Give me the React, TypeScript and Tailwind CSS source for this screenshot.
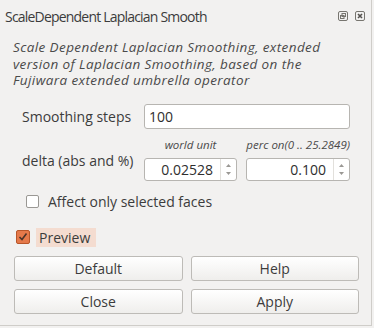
const font = { fontFamily: '"Open Sans", "DejaVu Sans", sans-serif' };

function SpinBox({ value }: { value: string }) {
    return (
        <div className="flex h-[25px] flex-1 rounded-[3px] border border-[#b7b5b1] bg-white">
            <div className="flex flex-1 items-center justify-end pr-[7px] text-[14px] text-[#2e2e2e]">
                {value}
            </div>
            <div className="flex w-[16px] flex-col items-center justify-center gap-[5px] border-l border-[#e2e0dc]">
                <svg width="5" height="3" viewBox="0 0 5 3">
                    <path d="M0 3 L2.5 0 L5 3 Z" fill="#9a9894" />
                </svg>
                <svg width="5" height="3" viewBox="0 0 5 3">
                    <path d="M0 0 L2.5 3 L5 0 Z" fill="#9a9894" />
                </svg>
            </div>
        </div>
    );
}

function Button({ label }: { label: string }) {
    return (
        <button
            type="button"
            className="h-[25px] flex-1 rounded-[3px] border border-[#bdbbb7] bg-gradient-to-b from-white to-[#efeeec] text-[14px] text-[#3c3c3c]"
        >
            {label}
        </button>
    );
}

export default function App() {
    return (
        <div className="h-[328px] w-[374px] bg-[#f2f1f0]" style={font}>
            <div className="flex h-[326px] w-[372px] flex-col border-b border-r border-[#cfcdc9] bg-[#f2f1f0]">
                {/* Titulo */}
                <div className="flex h-[32px] items-center justify-between pl-[5px] pr-[6px]">
                    <span className="text-[14px] tracking-[-0.8px] text-[#3c3c3c]">ScaleDependent Laplacian Smooth</span>
                    <div className="flex items-center gap-[7px]">
                        <svg width="10" height="10" viewBox="0 0 10 10">
                            <rect x="0.5" y="0.5" width="9" height="9" rx="1.5" fill="none" stroke="#77756f" />
                            <rect x="4" y="2.5" width="3.5" height="3" fill="none" stroke="#77756f" />
                            <rect x="2.5" y="4.5" width="3.5" height="3" fill="none" stroke="#77756f" />
                        </svg>
                        <svg width="10" height="10" viewBox="0 0 10 10">
                            <rect x="0.5" y="0.5" width="9" height="9" rx="1.5" fill="none" stroke="#77756f" />
                            <path d="M3 3 L7 7 M7 3 L3 7" stroke="#55534f" strokeWidth="1.6" />
                        </svg>
                    </div>
                </div>

                {/* Descricao */}
                <div className="mt-[7px] flex flex-col pl-[13px] pr-[4px] text-[13.5px] italic tracking-[0.4px] text-[#4a4a4a]">
                    <span className="h-[16.5px] leading-[16.5px]">Scale Dependent Laplacian Smoothing, extended</span>
                    <span className="h-[16.5px] leading-[16.5px]">version of Laplacian Smoothing, based on the</span>
                    <span className="h-[16.5px] leading-[16.5px]">Fujiwara extended umbrella operator</span>
                </div>

                {/* Formulario */}
                <div className="mt-[15px] flex items-center pr-[21px]">
                    <span className="w-[144px] pl-[22px] text-[14px] text-[#3c3c3c]">Smoothing steps</span>
                    <div className="flex h-[25px] flex-1 items-center rounded-[3px] border border-[#b7b5b1] bg-white pl-[4px] text-[14px] text-[#2e2e2e]">
                        100
                    </div>
                </div>

                <div className="mt-[9px] flex pr-[21px]">
                    <span className="w-[144px] pl-[22px] pt-[13px] text-[14px] leading-[19px] text-[#3c3c3c]">
                        delta (abs and %)
                    </span>
                    <div className="flex flex-1 gap-[9px]">
                        <div className="flex w-[93px] flex-col">
                            <span className="h-[20px] text-center text-[11.5px] italic leading-[13px] text-[#4a4a4a]">world unit</span>
                            <SpinBox value="0.02528" />
                        </div>
                        <div className="flex flex-1 flex-col">
                            <span className="h-[20px] whitespace-nowrap text-right text-[11.5px] italic leading-[13px] text-[#4a4a4a]">
                                perc on(0 .. 25.2849)
                            </span>
                            <SpinBox value="0.100" />
                        </div>
                    </div>
                </div>

                <label className="mt-[11px] flex h-[19px] items-center pl-[26px] text-[14px] text-[#3c3c3c]">
                    <span className="mr-[9px] h-[13px] w-[13px] rounded-[2px] border border-[#9a9894] bg-white" />
                    Affect only selected faces
                </label>

                <div className="mt-[17px] flex h-[19px] items-center pl-[16px]">
                    <span className="flex h-[14px] w-[14px] items-center justify-center rounded-[2px] border border-[#b8562a] bg-[#e5794a]">
                        <svg width="10" height="10" viewBox="0 0 10 10">
                            <path d="M1.5 5 L4 7.5 L8.5 1.5" fill="none" stroke="#4a3329" strokeWidth="1.6" />
                        </svg>
                    </span>
                    <span className="ml-[6px] flex h-[19px] w-[60px] items-center bg-[#f4dcd0] pl-[3px] text-[14px] text-[#3c3c3c]">
                        Preview
                    </span>
                </div>

                <div className="mt-[9px] flex flex-col gap-[8px] pl-[14px] pr-[12px]">
                    <div className="flex gap-[8px]">
                        <Button label="Default" />
                        <Button label="Help" />
                    </div>
                    <div className="flex gap-[8px]">
                        <Button label="Close" />
                        <Button label="Apply" />
                    </div>
                </div>
            </div>
        </div>
    );
}
